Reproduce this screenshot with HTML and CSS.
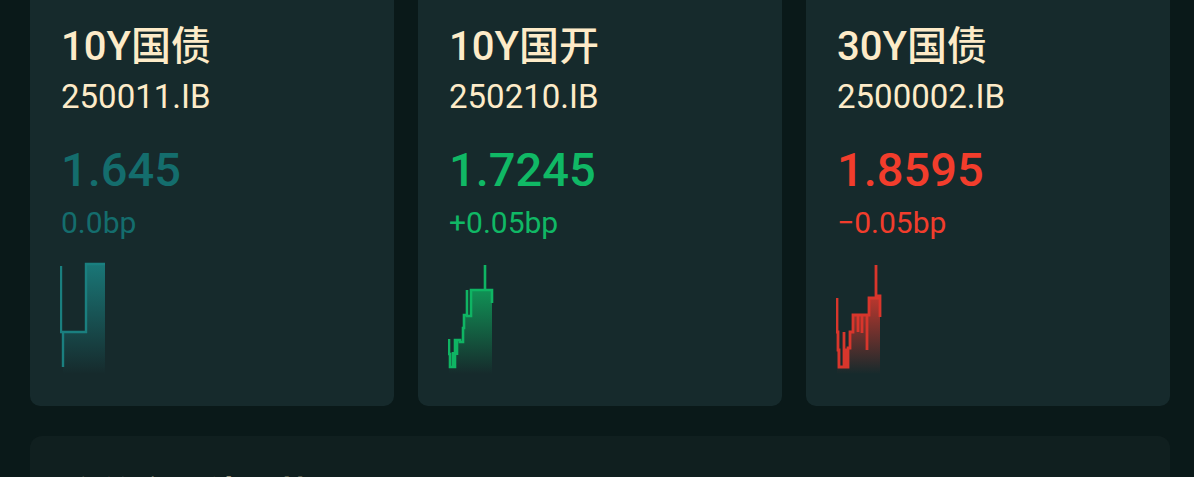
FILE: index.html
```html
<!DOCTYPE html>
<html lang="zh-CN">
<head>
  <meta charset="UTF-8">
  <meta name="viewport" content="width=device-width, initial-scale=1">
  <title>国债收益率</title>
  <link rel="stylesheet" href="styles.css">
</head>
<body>

<div class="page">
  <div class="bond-grid">

    <div class="bond-card flat">
      <div class="bond-name">10Y国债</div>
      <div class="bond-code">250011.IB</div>
      <div class="bond-yield">1.645</div>
      <div class="bond-change">0.0bp</div>
      <svg class="spark" width="46" height="112" viewBox="0 0 46 112">
        <defs>
          <linearGradient id="gTeal" x1="0" y1="0" x2="0" y2="1">
            <stop offset="0" stop-color="#1a7f7f" stop-opacity="0.9"/>
            <stop offset="1" stop-color="#1a7f7f" stop-opacity="0"/>
          </linearGradient>
        </defs>
        <path d="M3,70 H26 V2 H45 V112 H3 Z" fill="url(#gTeal)"/>
        <path d="M1,4 V70 H3 V105 V70 H26 V2 H45" fill="none" stroke="#1a7f7f" stroke-width="2.4"/>
      </svg>
    </div>

    <div class="bond-card up">
      <div class="bond-name">10Y国开</div>
      <div class="bond-code">250210.IB</div>
      <div class="bond-yield">1.7245</div>
      <div class="bond-change">+0.05bp</div>
      <svg class="spark" width="46" height="112" viewBox="0 0 46 112">
        <defs>
          <linearGradient id="gGreen" x1="0" y1="0" x2="0" y2="1">
            <stop offset="0" stop-color="#0fb463" stop-opacity="0.75"/>
            <stop offset="1" stop-color="#0fb463" stop-opacity="0"/>
          </linearGradient>
        </defs>
        <path d="M1,92 H2 V105 H5 V90 V105 H7 V78 H9 V93 V78 H12 V80 H15 V66 H16 V53 H23 V28 H44 V112 H1 Z" fill="url(#gGreen)"/>
        <path d="M1,77 V92 H2 V105 H5 V90 V105 H7 V78 H9 V93 V78 H12 V80 H15 V66 H16 V53 H19 V28 V54 H23 V28 H37 V3 V28 H44 V41" fill="none" stroke="#0fb463" stroke-width="2.6"/>
      </svg>
    </div>

    <div class="bond-card down">
      <div class="bond-name">30Y国债</div>
      <div class="bond-code">2500002.IB</div>
      <div class="bond-yield">1.8595</div>
      <div class="bond-change">−0.05bp</div>
      <svg class="spark" width="46" height="112" viewBox="0 0 46 112">
        <defs>
          <linearGradient id="gRed" x1="0" y1="0" x2="0" y2="1">
            <stop offset="0" stop-color="#e23a2e" stop-opacity="0.8"/>
            <stop offset="1" stop-color="#e23a2e" stop-opacity="0"/>
          </linearGradient>
        </defs>
        <path d="M1,70 H2 V88 H3 V105 H8 V70 V88 H10 V105 H12 V86 H14 V70 H17 V53 H33 V36 H44 V112 H1 Z" fill="url(#gRed)"/>
        <path d="M1,36 V70 H2 V88 H3 V105 H8 V70 V88 H10 V105 H12 V86 H14 V70 H17 V53 H22 V70 V53 H26 V71 V53 H31 V88 V53 H33 V36 H40 V3 V36 H42 V34 H44 V55" fill="none" stroke="#d8362c" stroke-width="2.8"/>
      </svg>
    </div>

  </div>

  <div class="panel">
    <h3 class="panel-title">收益率曲线走势</h3>
  </div>
</div>

</body>
</html>
```

FILE: styles.css
```css
* { box-sizing: border-box; }
body {
  margin: 0;
  background: #0a1919;
  font-family: 'Roboto', 'Noto Sans CJK SC', sans-serif;
  color: #fdebc8;
  overflow: hidden;
}
.page {
  padding: 0 24px 0 30px;
  margin-top: -20px;
}
.bond-grid {
  display: grid;
  grid-template-columns: repeat(3, 364px);
  gap: 24px;
}
.bond-card {
  background: #162a2c;
  border-radius: 10px;
  padding: 42px 30px 32px 31px;
}
.bond-name {
  font-size: 40px;
  font-weight: 500;
  line-height: 50px;
}
.bond-code {
  font-size: 33px;
  line-height: 50px;
}
.bond-yield {
  font-size: 47px;
  font-weight: 500;
  line-height: 60px;
  margin-top: 18px;
}
.bond-change {
  font-size: 30px;
  line-height: 46px;
}
.spark {
  display: block;
  margin-top: 16px;
  margin-left: -1px;
}
.flat .bond-yield, .flat .bond-change { color: #146d6d; }
.up .bond-yield, .up .bond-change { color: #10b865; }
.down .bond-yield, .down .bond-change { color: #f23d2c; }

.panel {
  margin-top: 30px;
  width: 1140px;
  background: #101f1f;
  border-radius: 12px;
  padding: 38px 32px;
  height: 200px;
}
.panel-title {
  margin: 0;
  font-size: 36px;
  line-height: 44px;
  font-weight: 600;
  color: #fdebc8;
}
```
